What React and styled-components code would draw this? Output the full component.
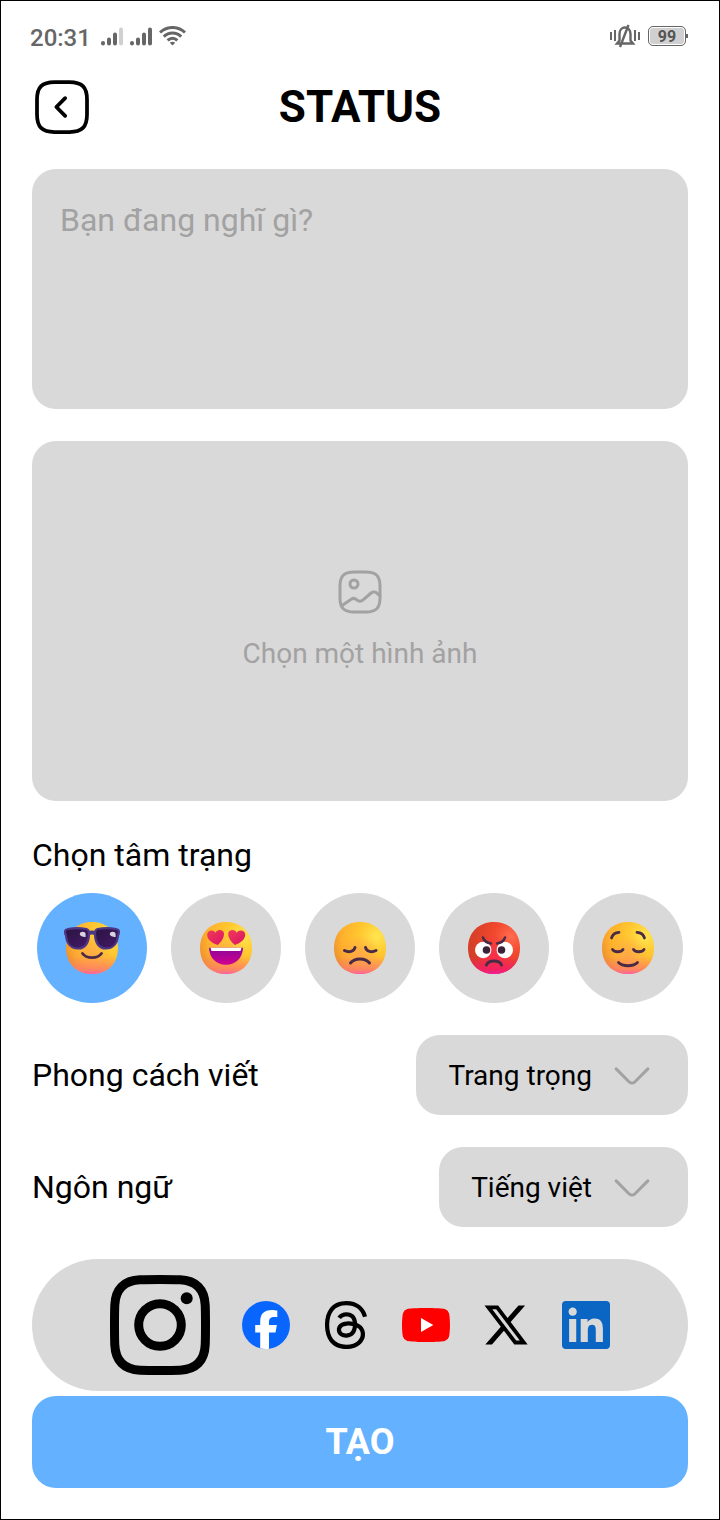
import React, { useState } from "react";
import styled, { createGlobalStyle } from "styled-components";
import { SiThreads } from "react-icons/si";

const GlobalStyle = createGlobalStyle`
  *, *::before, *::after { box-sizing: border-box; }
  body { margin: 0; background: #fff; }
  body, button, textarea, select { font-family: Roboto, sans-serif; }
`;

const GREY = "#d9d9d9";
const MUTED = "#a3a2a2";
const BLUE = "#64b2ff";

const Screen = styled.div`
  min-height: 100vh;
  border: 1px solid #000;
  background: #fff;
  color: #000;
`;

const StatusBar = styled.div`
  height: 70px;
  padding: 0 31px 0 29px;
  display: flex;
  align-items: center;
  justify-content: space-between;
  color: #666;
`;

const StatusGroup = styled.div`
  display: flex;
  align-items: center;
  gap: ${(p) => p.$gap}px;
`;

const Clock = styled.time`
  font-size: 24px;
  line-height: 32px;
  font-weight: 500;
  padding-top: 4px;
  margin-right: 4px;
`;

const Battery = styled.span`
  width: 38px;
  height: 20px;
  border: 1px solid #666;
  border-radius: 5px;
  background: #d0d0d0;
  box-shadow: inset 0 0 0 1px #fff;
  color: #555;
  font-size: 16px;
  line-height: 20px;
  font-weight: 700;
  text-align: center;
`;

const BatteryWrap = styled.span`
  display: flex;
  align-items: center;
  &::after {
    content: "";
    width: 2px;
    height: 4px;
    background: #666;
  }
`;

const Main = styled.main`
  padding: 6px 31px 31px;
  display: flex;
  flex-direction: column;
  gap: 32px;
`;

const Header = styled.header`
  display: grid;
  grid-template-columns: 60px 1fr 60px;
  align-items: center;
`;

const BackButton = styled.button`
  width: 60px;
  height: 60px;
  padding: 0;
  border: 0;
  background: none;
  color: inherit;
`;

const Title = styled.h1`
  margin: 0;
  font-size: 44px;
  line-height: 60px;
  font-weight: 700;
  text-align: center;
`;

const ThoughtBox = styled.textarea`
  display: block;
  width: 100%;
  height: 240px;
  padding: 32px 28px;
  border: 0;
  border-radius: 24px;
  background: ${GREY};
  font-size: 32px;
  line-height: 38px;
  resize: none;
  &::placeholder { color: ${MUTED}; opacity: 1; }
`;

const ImagePicker = styled.button`
  height: 360px;
  border: 0;
  border-radius: 24px;
  background: ${GREY};
  color: ${MUTED};
  font-size: 28px;
  line-height: 40px;
  display: flex;
  flex-direction: column;
  align-items: center;
  justify-content: center;
  gap: 18px;
`;

const MoodSection = styled.fieldset`
  margin: 0;
  padding: 0;
  border: 0;
  min-width: 0;
`;

const MoodTitle = styled.legend`
  padding: 0 0 16px;
  font-size: 32px;
  line-height: 44px;
`;

const MoodList = styled.div`
  display: flex;
  justify-content: center;
  gap: 24px;
`;

const MoodOption = styled.label`
  width: 110px;
  height: 110px;
  border-radius: 50%;
  background: ${(p) => (p.$active ? BLUE : GREY)};
  display: grid;
  place-items: center;
  cursor: pointer;
`;

const MoodInput = styled.input`
  position: absolute;
  opacity: 0;
  width: 1px;
  height: 1px;
  margin: 0;
`;

const OptionRow = styled.div`
  display: flex;
  align-items: center;
  justify-content: space-between;
`;

const OptionLabel = styled.label`
  font-size: 32px;
  line-height: 44px;
`;

const SelectBox = styled.div`
  position: relative;
`;

const Select = styled.select`
  appearance: none;
  field-sizing: content;
  display: block;
  height: 80px;
  padding: 0 96px 0 32px;
  border: 0;
  border-radius: 24px;
  background: ${GREY};
  color: #000;
  font-size: 28px;
`;

const SelectArrow = styled.svg`
  position: absolute;
  right: 32px;
  top: 16px;
  color: ${MUTED};
  pointer-events: none;
`;

const Footer = styled.div`
  display: flex;
  flex-direction: column;
  gap: 5px;
`;

const Platforms = styled.nav`
  padding: 16px;
  border-radius: 66px;
  background: ${GREY};
  display: flex;
  align-items: center;
  justify-content: center;
  gap: 32px;
`;

const PlatformLink = styled.a`
  display: flex;
  color: #000;
`;

const CreateButton = styled.button`
  height: 92px;
  border: 0;
  border-radius: 24px;
  background: ${BLUE};
  color: #fff;
  font-size: 36px;
  font-weight: 700;
`;

const SQUIRCLE = "M9 22h6c5 0 7-2 7-7V9c0-5-2-7-7-7H9C4 2 2 4 2 9v6c0 5 2 7 7 7z";
const lineIcon = {
  viewBox: "0 0 24 24",
  fill: "none",
  stroke: "currentColor",
  strokeWidth: 1.5,
  strokeLinecap: "round",
  strokeLinejoin: "round",
};

const BackIcon = () => (
  <svg width="60" height="60" {...lineIcon}>
    <path d={SQUIRCLE} />
    <path d="M13.26 15.53L9.74 12l3.52-3.53" />
  </svg>
);

const GalleryIcon = () => (
  <svg width="48" height="48" {...lineIcon}>
    <path d={SQUIRCLE} />
    <path d="M9 10a2 2 0 1 0 0-4 2 2 0 0 0 0 4zM2.67 18.95l4.93-3.31c.79-.53 1.93-.47 2.64.14l.33.29c.78.67 2.04.67 2.82 0l4.16-3.57c.78-.67 2.04-.67 2.82 0L22 13.9" />
  </svg>
);

const SignalIcon = ({ weak }) => (
  <svg width="23" height="19" viewBox="0 0 23 19" fill="none" stroke="#666" strokeWidth="4" strokeLinecap="round">
    <path d="M2 16v.5M8 12.500v4M14 7.500v9" />
    <path d="M20 2.500v14" stroke={weak ? "#d0d0d0" : "#666"} />
  </svg>
);

const WifiIcon = () => (
  <svg width="27" height="20" viewBox="0 0 27 20" fill="none" stroke="#666" strokeWidth="3">
    <path d="M1 6.500c7-6.700 18-6.700 25 0M4.800 10.600c5-4.900 12.400-4.900 17.400 0M8.600 14.400c3-2.800 6.800-2.800 9.800 0" />
    <path d="M10.800 16.700q2.700-1.800 5.400 0L13.500 19.500z" fill="#666" stroke="none" />
  </svg>
);

const SilentIcon = () => (
  <svg width="30" height="24" viewBox="0 0 30 24" fill="none" stroke="#666" strokeWidth="2">
    <path d="M1 8v8M5 6v11M25 6v11M29 8v8" />
    <path d="M7 19.500h16l-2.500-3V10c0-4-2.500-6.500-5.500-6.500S9.500 6 9.500 10v6.500zM18.500 1 10 23" strokeWidth="2.400" />
  </svg>
);

const InstagramIcon = () => (
  <svg width="100" height="100" viewBox="0 0 100 100" fill="none" stroke="#000" strokeWidth="9">
    <path d="M50 4.500C63 4.500 65 4.600 70 4.800 86 5.500 94.500 14 95.200 30 95.400 35 95.500 37 95.500 50S95.400 65 95.200 70C94.500 86 86 94.500 70 95.200 65 95.400 63 95.500 50 95.500S35 95.400 30 95.200C14 94.500 5.500 86 4.800 70 4.600 65 4.500 63 4.500 50S4.600 35 4.800 30C5.500 14 14 5.500 30 4.800 35 4.600 37 4.500 50 4.500z" />
    <circle cx="50" cy="50" r="21.300" />
    <circle cx="76.700" cy="23.300" r="6" fill="#000" stroke="none" />
  </svg>
);

const FacebookIcon = () => (
  <svg width="48" height="48" viewBox="0 0 48 48">
    <circle cx="24" cy="24" r="24" fill="#0866ff" />
    <path fill="#fff" d="M18.200 47.300V31.400h-5V24.100h5v-3.200c0-8.200 3.700-12 11.800-12 1.500 0 4.200.3 5.300.6v6.700c-.6-.1-1.600-.1-2.800-.1-4 0-5.500 1.500-5.500 5.400v2.600h7.900l-1.400 7.300H27v16.400a24 24 0 0 1-8.800-.5z" />
  </svg>
);

const YoutubeIcon = () => (
  <svg width="48" height="48" viewBox="0 0 24 24">
    <path fill="#f00" d="M23.498 6.186a3.016 3.016 0 0 0-2.122-2.136C19.505 3.545 12 3.545 12 3.545s-7.505 0-9.377.505A3.017 3.017 0 0 0 .502 6.186C0 8.070 0 12 0 12s0 3.930.502 5.814a3.016 3.016 0 0 0 2.122 2.136c1.871.505 9.376.505 9.376.505s7.505 0 9.377-.505a3.015 3.015 0 0 0 2.122-2.136C24 15.930 24 12 24 12s0-3.930-.502-5.814z" />
    <path fill="#fff" d="M9.500 8.500v7l6.150-3.500z" />
  </svg>
);

const XIcon = () => (
  <svg width="48" height="48" viewBox="0 0 24 24">
    <path d="M18.244 2.250h3.308l-7.227 8.260 8.502 11.240H16.170l-5.214-6.817L4.990 21.750H1.680l7.730-8.835L1.254 2.250H8.080l4.713 6.231zm-1.161 17.520h1.833L7.084 4.126H5.117z" />
  </svg>
);

const LinkedinIcon = () => (
  <svg width="48" height="48" viewBox="0 0 24 24" fill="#0a66c2">
    <path d="M20.447 20.452h-3.554v-5.569c0-1.328-.027-3.037-1.852-3.037-1.853 0-2.136 1.445-2.136 2.939v5.667H9.351V9h3.414v1.561h.046c.477-.9 1.637-1.850 3.370-1.850 3.601 0 4.267 2.370 4.267 5.455v6.286zM5.337 7.433c-1.144 0-2.063-.926-2.063-2.065 0-1.138.92-2.063 2.063-2.063 1.140 0 2.064.925 2.064 2.063 0 1.139-.925 2.065-2.064 2.065zm1.782 13.019H3.555V9h3.564v11.452zM22.225 0H1.771C.792 0 0 .774 0 1.729v20.542C0 23.227.792 24 1.771 24h20.451C23.200 24 24 23.227 24 22.271V1.729C24 .774 23.200 0 22.222 0h.003z" />
  </svg>
);

const FACE = "M28 2C43.500 2 54 12.500 54 28S43.500 54 28 54 2 43.500 2 28 12.500 2 28 2z";

const Face = ({ id, angry, children }) => (
  <svg width="56" height="56" viewBox="0 0 56 56" fill="none" strokeLinecap="round" strokeLinejoin="round">
    <defs>
      <radialGradient id={`${id}-skin`} cx="0.82" cy="0.28" r="0.9">
        <stop offset="0" stopColor={angry ? "#ff6d50" : "#ffe650"} />
        <stop offset="0.35" stopColor={angry ? "#f2492f" : "#ffc930"} />
        <stop offset="0.75" stopColor={angry ? "#dc4028" : "#ffb02c"} />
        <stop offset="1" stopColor={angry ? "#cf3f28" : "#ec9030"} />
      </radialGradient>
      <radialGradient id={`${id}-glow`} cx="0.5" cy="0.65" r="0.4">
        <stop offset="0" stopColor={angry ? "#ff2856" : "#ffa050"} stopOpacity="0.75" />
        <stop offset="1" stopColor={angry ? "#ff2856" : "#ffa050"} stopOpacity="0" />
      </radialGradient>
      <linearGradient id={`${id}-chin`} x1="0" y1="0" x2="0" y2="1">
        <stop offset="0.66" stopColor={angry ? "#f81a64" : "#ff8060"} stopOpacity="0" />
        <stop offset="0.92" stopColor={angry ? "#f81a70" : "#ff7a70"} stopOpacity="0.8" />
        <stop offset="1" stopColor={angry ? "#f020a0" : "#ff60a8"} />
      </linearGradient>
    </defs>
    <path d={FACE} fill={`url(#${id}-skin)`} />
    <path d={FACE} fill={`url(#${id}-glow)`} />
    <path d={FACE} fill={`url(#${id}-chin)`} />
    {children}
  </svg>
);

const INK = "#4a2b45";

const CoolFace = () => (
  <Face id="cool">
    <defs>
      <linearGradient id="cool-lens" x1="0" y1="0" x2="1" y2="1">
        <stop offset="0" stopColor="#29143f" />
        <stop offset="1" stopColor="#45196b" />
      </linearGradient>
    </defs>
    <path d="M18.500 33.500c4 5.500 15 5.500 19 0" stroke={INK} strokeWidth="2.800" />
    <path d="M24 12.200q4-1.600 8 0v2q-4-1.600-8 0z" fill="#4c3785" stroke="#4c3785" strokeWidth="2" />
    <g fill="url(#cool-lens)" stroke="#4c3785" strokeWidth="2.200">
      <path d="M4 9c5-1 13-1 18.500 0 2 .4 2.500 2 2.500 5 0 8-3.500 14.500-11 14.500C6 28.500 2.500 22.500 2 15.500 1 14 .8 11 1.500 10.200 2 9.500 3 9.200 4 9z" />
      <path d="M52 9c-5-1-13-1-18.500 0-2 .4-2.500 2-2.500 5 0 8 3.500 14.500 11 14.500 8 0 11.500-6 12-13 1-1.500 1.200-4.500.5-5.300-.5-.7-1.500-1-2.500-1.200z" />
    </g>
    <path d="M15.800 14c0-3 5.800-3 5.800 0v3c-3 0-5.800-1-5.800-3zM45.800 14c0-3 5.800-3 5.800 0v3c-3 0-5.800-1-5.800-3z" fill="#d9d3df" />
  </Face>
);

const LoveFace = () => (
  <Face id="love">
    <defs>
      <linearGradient id="love-heart" x1="0" y1="0" x2="1" y2="1">
        <stop offset="0" stopColor="#ee3c56" />
        <stop offset="1" stopColor="#dc1268" />
      </linearGradient>
      <linearGradient id="love-mouth" x1="0" y1="0" x2="0" y2="1">
        <stop offset="0" stopColor="#8a0899" />
        <stop offset="1" stopColor="#d00090" />
      </linearGradient>
    </defs>
    <g fill="url(#love-heart)">
      <path d="M19.500 25C13 22.500 9 19 9.200 14.500c.3-4.500 6-5.500 8.300-1.700 1.500-4 8.500-3.600 8.500 1C26 18 23 22.500 19.500 25z" />
      <path d="M37 25c-3.500-2.500-6.800-7-6.800-11.200 0-4.600 7-5 8.500-1 2.300-3.800 8.500-2.800 8.500 1.700C47.200 19 43.500 22.500 37 25z" />
    </g>
    <path d="M11 27.700h34C44.500 38 38 44.700 28 44.700S11.500 38 11 27.700z" fill="url(#love-mouth)" />
    <path d="M12.500 27.700h31l-1 3.300h-29z" fill="#fff" />
  </Face>
);

const SadFace = () => (
  <Face id="sad">
    <g stroke={INK} strokeWidth="3">
      <path d="M12.500 30.500c4.500 2.400 9.500 1 10.500-3M44 30.500c-4.500 2.400-9.500 1-10.500-3M18.500 43c4-5.500 15-5.500 19 0" />
    </g>
  </Face>
);

const AngryFace = () => (
  <Face id="angry" angry>
    <circle cx="17.200" cy="30" r="8.200" fill="#fff" />
    <circle cx="38.800" cy="30" r="8.200" fill="#fff" />
    <circle cx="20.500" cy="30" r="3.800" fill="#3b2238" />
    <circle cx="35.500" cy="30" r="3.800" fill="#3b2238" />
    <g stroke={INK} strokeWidth="2.400">
      <path d="M17 17.500c1 3 4 5.500 8 6M39 17.500c-1 3-4 5.500-8 6" />
      <path d="M20.500 45c2-5.500 13-5.500 15 0" strokeWidth="3" />
    </g>
  </Face>
);

const CalmFace = () => (
  <Face id="calm">
    <g stroke={INK} strokeWidth="2.800">
      <path d="M11.500 18c1-3.500 3.500-5.500 7.500-5.700M44.500 18c-1-3.500-3.500-5.500-7.500-5.700" />
      <path d="M12.500 29.500c2 3 8.500 3 10.500 0M33.500 29.500c2 3 8.500 3 10.500 0M18.500 42.500c4 4.300 15 4.300 19 0" />
    </g>
  </Face>
);

const MOODS = [
  { id: "cool", name: "Ngầu", Icon: CoolFace },
  { id: "love", name: "Yêu thích", Icon: LoveFace },
  { id: "sad", name: "Buồn", Icon: SadFace },
  { id: "angry", name: "Tức giận", Icon: AngryFace },
  { id: "calm", name: "Bình yên", Icon: CalmFace },
];

const ThreadsIcon = () => <SiThreads size={48} />;

const PLATFORMS = [
  { name: "Instagram", Icon: InstagramIcon },
  { name: "Facebook", Icon: FacebookIcon },
  { name: "Threads", Icon: ThreadsIcon },
  { name: "YouTube", Icon: YoutubeIcon },
  { name: "X", Icon: XIcon },
  { name: "LinkedIn", Icon: LinkedinIcon },
];

const SelectRow = ({ id, label, options }) => (
  <OptionRow>
    <OptionLabel htmlFor={id}>{label}</OptionLabel>
    <SelectBox>
      <Select id={id}>
        {options.map((option) => (
          <option key={option}>{option}</option>
        ))}
      </Select>
      <SelectArrow width="48" height="48" {...lineIcon}>
        <path d="M19.920 8.950l-6.520 6.520c-.77.770-2.030.770-2.800 0L4.080 8.950" />
      </SelectArrow>
    </SelectBox>
  </OptionRow>
);

export default function App() {
  const [mood, setMood] = useState("cool");

  return (
    <Screen>
      <GlobalStyle />
      <StatusBar>
        <StatusGroup $gap={6}>
          <Clock>20:31</Clock>
          <SignalIcon weak />
          <SignalIcon />
          <WifiIcon />
        </StatusGroup>
        <StatusGroup $gap={8}>
          <SilentIcon />
          <BatteryWrap>
            <Battery>99</Battery>
          </BatteryWrap>
        </StatusGroup>
      </StatusBar>
      <Main>
        <Header>
          <BackButton type="button" aria-label="Quay lại">
            <BackIcon />
          </BackButton>
          <Title>STATUS</Title>
        </Header>
        <ThoughtBox aria-label="Bạn đang nghĩ gì?" placeholder="Bạn đang nghĩ gì?" />
        <ImagePicker type="button">
          <GalleryIcon />
          Chọn một hình ảnh
        </ImagePicker>
        <MoodSection>
          <MoodTitle>Chọn tâm trạng</MoodTitle>
          <MoodList>
            {MOODS.map(({ id, name, Icon }) => (
              <MoodOption key={id} $active={mood === id}>
                <MoodInput
                  type="radio"
                  name="mood"
                  aria-label={name}
                  checked={mood === id}
                  onChange={() => setMood(id)}
                />
                <Icon />
              </MoodOption>
            ))}
          </MoodList>
        </MoodSection>
        <SelectRow id="style" label="Phong cách viết" options={["Trang trọng", "Thân mật"]} />
        <SelectRow id="language" label="Ngôn ngữ" options={["Tiếng việt", "English"]} />
        <Footer>
          <Platforms aria-label="Mạng xã hội">
            {PLATFORMS.map(({ name, Icon }) => (
              <PlatformLink key={name} href={`#${name.toLowerCase()}`} aria-label={name}>
                <Icon />
              </PlatformLink>
            ))}
          </Platforms>
          <CreateButton type="button">TẠO</CreateButton>
        </Footer>
      </Main>
    </Screen>
  );
}
